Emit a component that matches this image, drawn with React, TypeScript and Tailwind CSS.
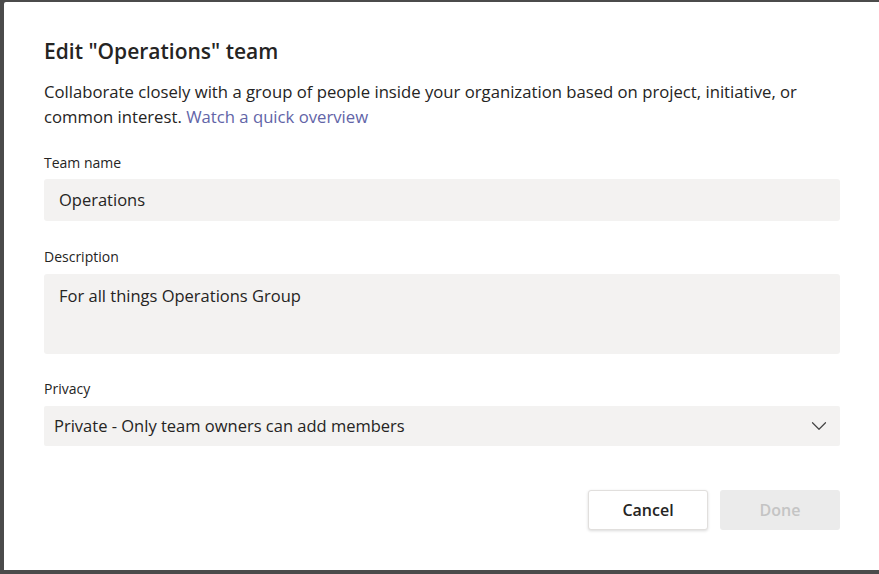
import { ChevronDown } from "lucide-react";

export default function App() {
    return (
        <div className="w-[879px] h-[574px] bg-[#4b4b4b] pt-[2px] pl-[4px] pb-[4px] overflow-hidden" style={{ fontFamily: '"Open Sans", "Noto Sans", sans-serif' }}>
            <div className="h-full bg-white rounded-tl-[2px] pl-[40px] pr-[39px] pt-[35px] text-[#252423]">
                <h1 className="text-[21px] leading-[28px] font-semibold">Edit "Operations" team</h1>
                <p className="mt-[14px] text-[16.7px] leading-[25px]">
                    Collaborate closely with a group of people inside your organization based on project, initiative, or common interest.{" "}
                    <a className="text-[#6264a7]">Watch a quick overview</a>
                </p>

                <label className="block mt-[24px] text-[14px] leading-[20px]">Team name</label>
                <div className="mt-[6px] h-[42px] bg-[#f3f2f1] rounded-[3px] flex items-center px-[15px] text-[16.5px]">Operations</div>

                <label className="block mt-[26px] text-[14px] leading-[20px]">Description</label>
                <div className="mt-[7px] h-[80px] bg-[#f3f2f1] rounded-[3px] px-[15px] pt-[8px] text-[16.5px] leading-[27px]">For all things Operations Group</div>

                <label className="block mt-[25px] text-[14px] leading-[20px]">Privacy</label>
                <div className="mt-[7px] h-[40px] bg-[#f3f2f1] rounded-[2px] flex items-center justify-between pl-[10px] pr-[8px] text-[16.5px]">
                    <span>Private - Only team owners can add members</span>
                    <ChevronDown className="w-[26px] h-[26px] text-[#444]" strokeWidth={1.1} />
                </div>

                <div className="mt-[44px] flex justify-end gap-[12px]">
                    <button className="w-[120px] h-[40px] bg-white border border-[#e1dfdd] rounded-[3px] shadow-[0_1px_3px_rgba(0,0,0,0.15)] text-[16px] font-semibold">Cancel</button>
                    <button className="w-[120px] h-[40px] bg-[#ebebeb] rounded-[3px] text-[16px] font-semibold text-[#c4c4c4]">Done</button>
                </div>
            </div>
        </div>
    );
}
